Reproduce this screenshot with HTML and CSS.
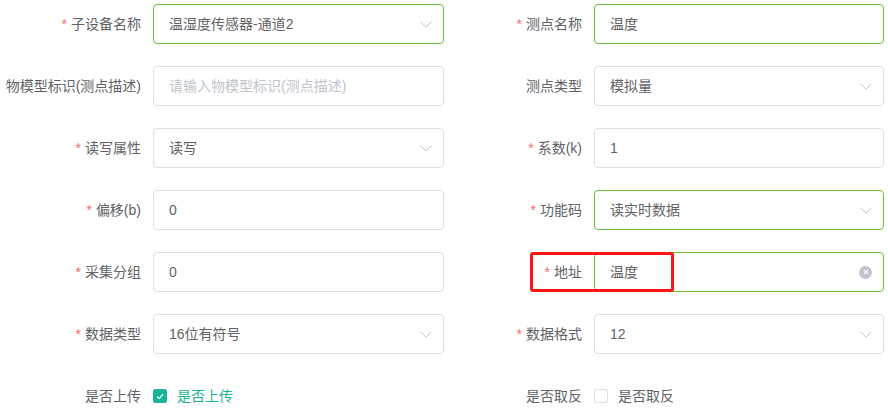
FILE: index.html
```html
<!DOCTYPE html>
<html lang="zh-CN">
<head>
<meta charset="utf-8">
<title>测点编辑</title>
<link rel="stylesheet" href="styles.css">
</head>
<body>
<form class="form">
  <div class="col col-left">
    <div class="item">
      <label class="label"><span class="req">*</span>子设备名称</label>
      <div class="control focus">
        <span class="value">温湿度传感器-通道2</span>
        <svg class="arrow" width="12" height="7" viewBox="0 0 12 7"><path d="M0.5 0.8 L6 6 L11.5 0.8" fill="none" stroke="#c0c4cc" stroke-width="1"/></svg>
      </div>
    </div>
    <div class="item">
      <label class="label">物模型标识(测点描述)</label>
      <div class="control">
        <span class="value placeholder">请输入物模型标识(测点描述)</span>
      </div>
    </div>
    <div class="item">
      <label class="label"><span class="req">*</span>读写属性</label>
      <div class="control">
        <span class="value">读写</span>
        <svg class="arrow" width="12" height="7" viewBox="0 0 12 7"><path d="M0.5 0.8 L6 6 L11.5 0.8" fill="none" stroke="#c0c4cc" stroke-width="1"/></svg>
      </div>
    </div>
    <div class="item">
      <label class="label"><span class="req">*</span>偏移(b)</label>
      <div class="control">
        <span class="value">0</span>
      </div>
    </div>
    <div class="item">
      <label class="label"><span class="req">*</span>采集分组</label>
      <div class="control">
        <span class="value">0</span>
      </div>
    </div>
    <div class="item">
      <label class="label"><span class="req">*</span>数据类型</label>
      <div class="control">
        <span class="value">16位有符号</span>
        <svg class="arrow" width="12" height="7" viewBox="0 0 12 7"><path d="M0.5 0.8 L6 6 L11.5 0.8" fill="none" stroke="#c0c4cc" stroke-width="1"/></svg>
      </div>
    </div>
    <div class="item item-last">
      <label class="label">是否上传</label>
      <div class="check">
        <span class="box checked"><svg width="8" height="7" viewBox="0 0 8 7"><path d="M1 3.5 L3.2 5.6 L7 1.2" fill="none" stroke="#fff" stroke-width="1.2"/></svg></span>
        <span class="check-text active">是否上传</span>
      </div>
    </div>
  </div>
  <div class="col col-right">
    <div class="item">
      <label class="label"><span class="req">*</span>测点名称</label>
      <div class="control focus">
        <span class="value">温度</span>
      </div>
    </div>
    <div class="item">
      <label class="label">测点类型</label>
      <div class="control">
        <span class="value">模拟量</span>
        <svg class="arrow" width="12" height="7" viewBox="0 0 12 7"><path d="M0.5 0.8 L6 6 L11.5 0.8" fill="none" stroke="#c0c4cc" stroke-width="1"/></svg>
      </div>
    </div>
    <div class="item">
      <label class="label"><span class="req">*</span>系数(k)</label>
      <div class="control">
        <span class="value">1</span>
      </div>
    </div>
    <div class="item">
      <label class="label"><span class="req">*</span>功能码</label>
      <div class="control focus">
        <span class="value">读实时数据</span>
        <svg class="arrow" width="12" height="7" viewBox="0 0 12 7"><path d="M0.5 0.8 L6 6 L11.5 0.8" fill="none" stroke="#c0c4cc" stroke-width="1"/></svg>
      </div>
    </div>
    <div class="item item-mark">
      <label class="label"><span class="req">*</span>地址</label>
      <div class="control focus">
        <span class="value">温度</span>
        <span class="clear"><svg width="6" height="6" viewBox="0 0 6 6"><path d="M0.8 0.8 L5.2 5.2 M5.2 0.8 L0.8 5.2" stroke="#fff" stroke-width="1.1"/></svg></span>
      </div>
      <div class="mark"></div>
    </div>
    <div class="item">
      <label class="label"><span class="req">*</span>数据格式</label>
      <div class="control">
        <span class="value">12</span>
        <svg class="arrow" width="12" height="7" viewBox="0 0 12 7"><path d="M0.5 0.8 L6 6 L11.5 0.8" fill="none" stroke="#c0c4cc" stroke-width="1"/></svg>
      </div>
    </div>
    <div class="item item-last">
      <label class="label">是否取反</label>
      <div class="check">
        <span class="box"></span>
        <span class="check-text">是否取反</span>
      </div>
    </div>
  </div>
</form>
</body>
</html>
```
FILE: styles.css
```css
* { box-sizing: border-box; }
html, body { margin: 0; padding: 0; background: #fff; }
body {
  font-family: "Liberation Sans", "Noto Sans CJK SC", sans-serif;
  font-size: 14px;
  color: #606266;
}
.form {
  display: grid;
  grid-template-columns: 444px 444px;
  padding-top: 4px;
}
.col { display: flex; flex-direction: column; gap: 22px; }
.col-right { padding-right: 4px; }
.item {
  display: flex;
  align-items: center;
  height: 40px;
}
.item-mark { position: relative; }
.label {
  flex: none;
  text-align: right;
  padding-right: 12px;
  line-height: 40px;
  white-space: nowrap;
}
.col-left .label { width: 153px; }
.col-right .label { width: 150px; }
.req { color: #f56c6c; margin-right: 4px; }
.control {
  flex: 1;
  height: 40px;
  border: 1px solid #dcdfe6;
  border-radius: 4px;
  display: flex;
  align-items: center;
  padding: 0 11px 0 15px;
}
.control.focus { border-color: #67c23a; }
.value { flex: 1; line-height: 38px; white-space: nowrap; }
.placeholder { color: #c0c4cc; }
.arrow { flex: none; display: block; margin-top: 1px; }
.clear {
  flex: none;
  width: 13px; height: 13px;
  border-radius: 50%;
  background: #c0c4cc;
  display: flex; align-items: center; justify-content: center;
  margin-right: 0;
}
.clear svg { display: block; }
.mark {
  position: absolute;
  left: 86px; top: 0;
  width: 144px; height: 40px;
  border: 3px solid #fa1414;
  border-radius: 3px;
  pointer-events: none;
}
.check { display: flex; align-items: center; }
.box {
  width: 14px; height: 14px;
  border: 1px solid #dcdfe6;
  border-radius: 2px;
  background: #fff;
  display: flex; align-items: center; justify-content: center;
}
.box.checked { background: #1ab394; border-color: #1ab394; }
.box svg { display: block; }
.check-text { padding-left: 10px; line-height: 40px; }
.check-text.active { color: #1ab394; }
```
